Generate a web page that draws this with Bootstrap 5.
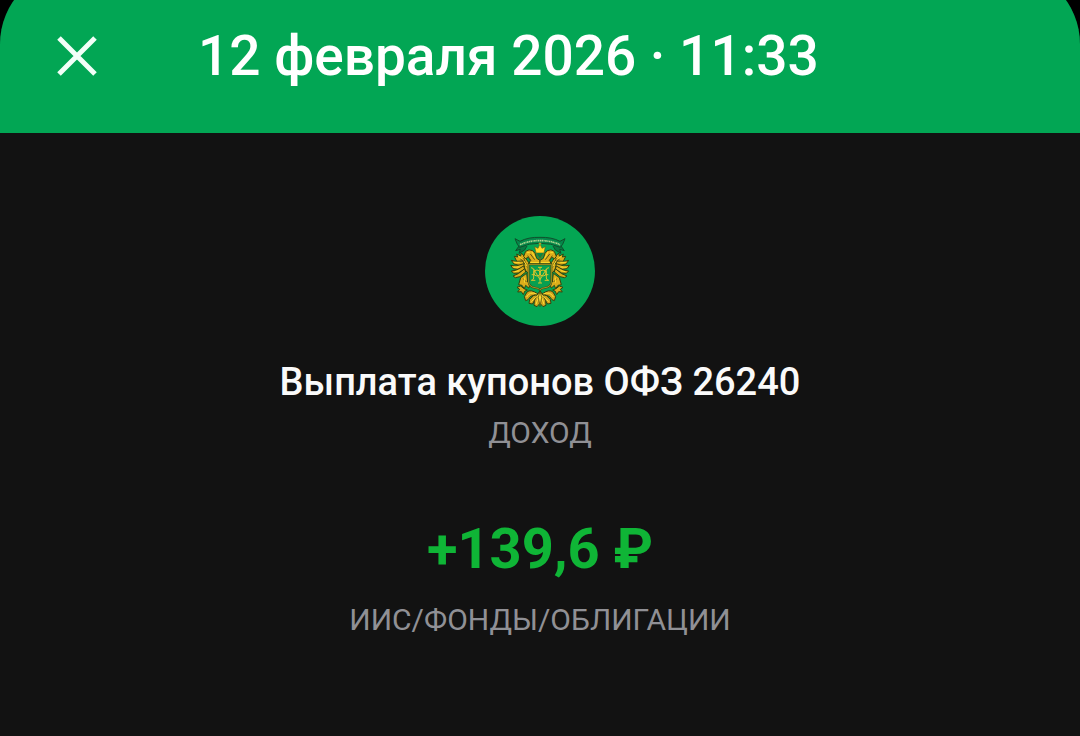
<!DOCTYPE html>
<html lang="ru" data-bs-theme="dark">
<head>
<meta charset="utf-8">
<meta name="viewport" content="width=device-width, initial-scale=1">
<title>Выплата купонов ОФЗ 26240</title>
<link href="https://cdn.jsdelivr.net/npm/bootstrap@5.3.0/dist/css/bootstrap.min.css" rel="stylesheet">
<style>
  body { background: #000; font-family: Roboto, "Noto Sans", sans-serif; overflow-x: hidden; }
  .screen { background: #121212; border-radius: 76px 76px 0 0; margin-top: -32px; overflow: hidden; }
  .op-header { background: #02a654; color: #f2fff8; padding: 52px 52px 41px; gap: 96px; }
  .op-date { font-size: 55px; font-weight: 500; line-height: 72px; }
  .close-btn { color: inherit; line-height: 0; }
  .op-body { padding: 83px 24px 96px; }
  .op-title { font-size: 38px; font-weight: 500; line-height: 48px; color: #fafafa; margin-top: 32px; }
  .op-note { font-size: 30px; line-height: 40px; color: #909095; }
  .op-kind { margin-top: 7px; }
  .op-sum { font-size: 56px; font-weight: 700; line-height: 72px; color: #0fb536; margin-top: 60px; }
  .op-account { margin-top: 15px; }
</style>
</head>
<body>
<div class="screen d-flex flex-column min-vh-100">
  <header class="op-header d-flex align-items-center">
    <button type="button" class="close-btn btn border-0 p-0" aria-label="Закрыть">
      <svg width="50" height="50" viewBox="0 0 50 50" fill="none" stroke="currentColor" stroke-width="5" aria-hidden="true"><path d="M7 7 43 43M43 7 7 43"/></svg>
    </button>
    <h1 class="op-date m-0">12 февраля 2026 · 11:33</h1>
  </header>
  <main class="op-body flex-grow-1 d-flex flex-column align-items-center text-center">
    <svg width="110" height="110" viewBox="15 18 330 330" role="img" aria-label="Герб">
      <defs>
        <g id="half" stroke-linejoin="round">
          <!-- wing -->
          <g stroke="#33430f" stroke-width="3" fill="#dcae1c">
            <path d="M103 139L113 141L110 132L122 138L124 129L134 140L146 158V192L136 180L129 163L110 154Z"/>
            <path d="M94 151L107 154L128 153L134 162L118 166L102 162Z"/>
            <path d="M92 166L108 168L131 161L133 171L114 178L99 176Z"/>
            <path d="M94 183L110 180L131 168L134 178L115 189L101 190Z"/>
            <path d="M99 198L115 191L134 176L137 186L120 200L106 203Z"/>
            <!-- head and neck -->
            <path d="M131 139L137 124Q147 116 158 122L165 130L170 145L180 151V161H147L151 151L145 142L136 146Z"/>
            <!-- leg and claw -->
            <path d="M122 203L140 190L143 216L151 222L146 234L137 226L133 236L126 226L116 224Z"/>
            <path d="M122 228L132 236L142 240L134 244L130 254L124 245L113 246L119 238L111 232Z"/>
          </g>
          <g fill="none" stroke="#5b5218" stroke-width="3">
            <path d="M151 132L164 149M143 137L153 152M130 206L139 216M121 147L139 160M131 144L142 172"/>
          </g>
          <path d="M141 128h8M156 126l10 19M151 158H178M132 153l10 17M134 203v15M101 157h18M101 171h17M104 185l14-3M115 138l10 8" stroke="#ffdf2d" stroke-width="3" fill="none"/>
          <!-- tail feathers -->
          <g stroke="#33430f" stroke-width="3" fill="#d2a51d">
            <path d="M174 252Q152 236 141 246L133 260L137 272L144 269L152 259Z"/>
            <path d="M177 252Q158 254 149 268L147 280L157 282L167 267Z"/>
            <path d="M180 242L172 254L163 272L162 286L171 290L180 280Z"/>
          </g>
          <path d="M170 252Q149 243 140 261M175 255L154 275M179 252L168 283" fill="none" stroke="#ffe039" stroke-width="3"/>
          <!-- shield edge -->
          <path d="M180 163H146V216Q147 231 165 233Q176 234 180 240" fill="#079f50" stroke="#3d4d17" stroke-width="6"/>
          <path d="M180 163H146V216Q147 231 165 233Q176 234 180 240" fill="none" stroke="#dab722" stroke-width="2"/>
        </g>
      </defs>
      <circle cx="180" cy="183" r="165" fill="#04a653"/>
      <!-- banner with its curled ends -->
      <g stroke="#104f2c" stroke-width="3">
        <path d="M120 104L107 122L121 118L117 130L134 120L141 108M240 104L253 122L239 118L243 130L226 120L219 108" fill="#087a40"/>
        <path d="M105 86L120 94Q145 81 180 82Q215 81 240 94L255 86L248 103L241 112Q213 99 180 100Q147 99 119 112L112 103Z" fill="#05884a"/>
      </g>
      <path d="M120 104Q149 91 180 92Q211 91 240 104" fill="none" stroke="#aed68f" stroke-width="5" stroke-dasharray="5 1.500 3 1.500"/>
      <use href="#half"/>
      <use href="#half" transform="matrix(-1 0 0 1 360 0)"/>
      <path d="M180 244l-5 18 5 28 5-28Z" fill="#ffdb30" stroke="#33430f" stroke-width="2"/>
      <!-- crown -->
      <path d="M168 129L164 110L174 115L180 102L186 115L196 110L192 129Z" fill="#ffdb23" stroke="#665c1b" stroke-width="2"/>
      <path d="M180 97v9M176 101h8" stroke="#e5c42c" stroke-width="2"/>
      <path d="M169 130L180 148L191 130" fill="#078745" stroke="#77681b" stroke-width="3"/>
      <!-- monogram -->
      <g fill="none" stroke="#d5c32c" stroke-width="3">
        <path d="M153 173Q162 173 161 182V204Q161 210 154 211M207 173Q198 173 199 182V204Q199 210 206 211M154 211H166M194 211H206M161 177L180 209L199 177"/>
        <path d="M180 171V219M174 172H186M174 219H186"/>
        <ellipse cx="171" cy="189" rx="9" ry="9"/>
        <ellipse cx="189" cy="189" rx="9" ry="9"/>
        <path d="M155 194H165M195 194H205"/>
      </g>
    </svg>
    <h2 class="op-title mb-0">Выплата купонов ОФЗ 26240</h2>
    <p class="op-note op-kind mb-0">ДОХОД</p>
    <p class="op-sum mb-0">+139,6 ₽</p>
    <p class="op-note op-account mb-0">ИИС/ФОНДЫ/ОБЛИГАЦИИ</p>
  </main>
</div>
</body>
</html>
